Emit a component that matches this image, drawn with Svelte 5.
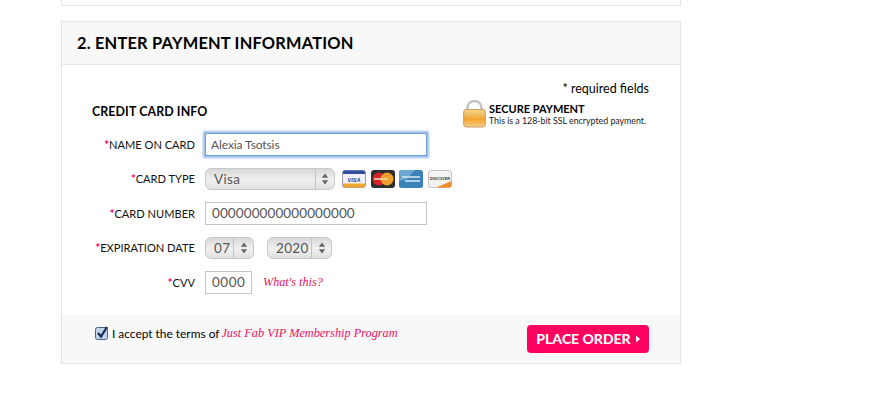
<script lang="ts">
  const months = "07";
  const years = "2020";
</script>

{#snippet stepper()}
  <span class="select__arrows">
    <svg viewBox="0 0 10 16" width="8" height="14" aria-hidden="true">
      <path d="M5 1 L9 6.5 H1 Z" fill="#666" />
      <path d="M5 15 L9 9.5 H1 Z" fill="#666" />
    </svg>
  </span>
{/snippet}

{#snippet label(text: string)}
  <span class="label"><span class="req">*</span>{text}</span>
{/snippet}

<div class="page">
  <div class="prev"></div>

  <section class="card">
    <h2 class="card__title">2. ENTER PAYMENT INFORMATION</h2>

    <div class="card__body">
      <p class="required">* required fields</p>

      <div class="intro">
        <h3 class="intro__title">CREDIT CARD INFO</h3>
        <div class="secure">
          <svg class="secure__lock" viewBox="0 0 23 28" width="23" height="28" aria-hidden="true">
            <defs>
              <linearGradient id="lockBody" x1="0" y1="0" x2="0" y2="1">
                <stop offset="0" stop-color="#f8d68a" />
                <stop offset="0.45" stop-color="#eeb04a" />
                <stop offset="0.55" stop-color="#f6a52a" />
                <stop offset="1" stop-color="#f7cf8c" />
              </linearGradient>
            </defs>
            <path d="M4.5 10V7.500a7 6.500 0 0 1 14 0V10" fill="none" stroke="#c4c4c4" stroke-width="2.400" />
            <rect x="0.7" y="9.500" width="21.6" height="17.5" rx="2.5" fill="url(#lockBody)" stroke="#c89a5e" />
          </svg>
          <div>
            <div class="secure__title">SECURE PAYMENT</div>
            <div class="secure__note">This is a 128-bit SSL encrypted payment.</div>
          </div>
        </div>
      </div>

      <div class="form">
        {@render label("NAME ON CARD")}
        <div class="field">
          <input class="input input--name input--focus" type="text" value="Alexia Tsotsis" />
        </div>

        {@render label("CARD TYPE")}
        <div class="field">
          <div class="select select--type">
            <span class="select__value">Visa</span>
            {@render stepper()}
          </div>
          <div class="cards">
            <svg viewBox="0 0 24 18" width="24" height="18" aria-hidden="true">
              <rect x="0.5" y="0.5" width="23" height="17" rx="2" fill="#f2f2f6" stroke="#9a9ab0" />
              <path d="M1 2.5a2 2 0 0 1 2-2h18a2 2 0 0 1 2 2V4H1Z" fill="#2d4f9e" />
              <path d="M1 13.5h22v2a2 2 0 0 1-2 2H3a2 2 0 0 1-2-2Z" fill="#f0a92e" />
              <text x="12" y="11.5" class="cards__text" fill="#27438e">VISA</text>
            </svg>
            <svg viewBox="0 0 24 18" width="24" height="18" aria-hidden="true">
              <rect x="0" y="0" width="24" height="18" rx="3" fill="#2e2e2e" />
              <circle cx="8" cy="9" r="6.5" fill="#d8222a" />
              <circle cx="16" cy="9" r="6.5" fill="#eda02c" />
              <rect x="3" y="8" width="14" height="2" fill="#f3d6b0" opacity="0.8" />
            </svg>
            <svg viewBox="0 0 24 18" width="24" height="18" aria-hidden="true">
              <rect x="0" y="0" width="24" height="18" rx="2.5" fill="#3b82b8" />
              <path d="M0 2.5A2.5 2.5 0 0 1 2.500 0H16L8 9 0 11Z" fill="#6aa8d2" />
              <rect x="3" y="6" width="18" height="2" fill="#cfe3f1" opacity="0.8" />
              <rect x="6" y="10" width="15" height="2" fill="#cfe3f1" opacity="0.8" />
            </svg>
            <svg viewBox="0 0 24 18" width="24" height="18" aria-hidden="true">
              <rect x="0.5" y="0.5" width="23" height="17" rx="2.5" fill="#f2f2f0" stroke="#c4c4c4" />
              <path d="M8 17.500 L23.500 11v4a2.500 2.500 0 0 1-2.500 2.500Z" fill="#ee8c2c" />
              <text x="12" y="10" class="cards__text cards__text--small" fill="#333">DISCOVER</text>
            </svg>
          </div>
        </div>

        {@render label("CARD NUMBER")}
        <div class="field">
          <input class="input input--number" type="text" value="000000000000000000" />
        </div>

        {@render label("EXPIRATION DATE")}
        <div class="field field--exp">
          <div class="select select--month">
            <span class="select__value">{months}</span>
            {@render stepper()}
          </div>
          <div class="select select--year">
            <span class="select__value">{years}</span>
            {@render stepper()}
          </div>
        </div>

        {@render label("CVV")}
        <div class="field">
          <input class="input input--cvv" type="text" value="0000" />
          <a class="whats" href="#cvv">What's this?</a>
        </div>
      </div>
    </div>

    <div class="card__foot">
      <div class="terms">
        <svg class="terms__check" viewBox="0 0 14 14" width="14" height="14" aria-hidden="true">
          <rect x="0.5" y="1.500" width="12" height="12" rx="2" fill="#c5d3e8" stroke="#4a6186" />
          <path d="M3 7 L6 10.500 L12 1" fill="none" stroke="#1c2f55" stroke-width="2.300" />
        </svg>
        <span>I accept the terms of</span>
        <a class="terms__link" href="#terms">Just Fab VIP Membership Program</a>
      </div>
      <button class="order" type="button">
        PLACE ORDER
        <svg viewBox="0 0 5 9" width="4" height="8" aria-hidden="true"><path d="M0 0 L5 4.500 L0 9 Z" fill="#fff" /></svg>
      </button>
    </div>
  </section>
</div>

<style>
  :global(body) {
    margin: 0;
    background: #fff;
  }

  .page {
    width: 620px;
    margin-left: 61px;
    font-family: Lato, "Liberation Sans", sans-serif;
    color: #000;
  }

  .prev {
    height: 5px;
    border: 1px solid #e6e6e6;
    border-top: 0;
    margin-bottom: 15px;
  }

  .card {
    border: 1px solid #e4e4e4;
  }

  .card__title {
    margin: 0;
    height: 42px;
    padding-left: 15px;
    background: #f8f8f8;
    border-bottom: 1px solid #e4e4e4;
    font-size: 16.400px;
    font-weight: 700;
    line-height: 42px;
    letter-spacing: 0.2px;
  }

  .card__body {
    box-sizing: border-box;
    height: 250px;
    padding: 16px 31px 0 30px;
  }

  .required {
    margin: 0;
    text-align: right;
    font-size: 12.500px;
    line-height: 16px;
  }

  .intro {
    display: flex;
    align-items: flex-start;
    margin-top: 3px;
  }

  .intro__title {
    margin: 4px 0 0;
    width: 371px;
    flex: none;
    font-size: 12.400px;
    font-weight: 700;
    line-height: 16px;
    letter-spacing: 0.1px;
  }

  .secure {
    display: flex;
    gap: 3px;
    white-space: nowrap;
  }

  .secure__title {
    font-size: 11px;
    font-weight: 700;
    line-height: 13px;
    margin-top: 2px;
  }

  .secure__note {
    font-size: 8.800px;
    line-height: 12px;
    color: #222;
  }

  .form {
    display: grid;
    grid-template-columns: 133px 1fr;
    grid-auto-rows: 34.5px;
    column-gap: 10px;
    align-items: center;
    margin: -1px 0 0 -30px;
  }

  .label {
    text-align: right;
    font-size: 11.100px;
    white-space: nowrap;
    color: #111;
  }

  .req {
    color: #ff0060;
    font-weight: 900;
  }

  .field {
    display: flex;
    align-items: center;
  }

  .field--exp {
    gap: 13px;
  }

  .input {
    box-sizing: border-box;
    height: 23px;
    margin: 0;
    padding: 0 5px;
    border: 1px solid #c4c4c4;
    border-radius: 0;
    outline: 0;
    font-family: inherit;
    font-size: 13.500px;
    color: #555;
    background: #fff;
  }

  .input--name,
  .input--number {
    width: 222px;
  }

  .input--name {
    font-size: 12px;
    letter-spacing: -0.1px;
  }

  .input--number {
    letter-spacing: 0.1px;
    padding-left: 6px;
  }

  .input--focus {
    border: 1px solid #6f9fd6;
    box-shadow: 0 0 2px 2px #9cc0ea;
  }

  .input--cvv {
    width: 47px;
    letter-spacing: 0.5px;
    padding-left: 6px;
  }

  .whats {
    margin-left: 11px;
    font-family: "Liberation Serif", serif;
    font-style: italic;
    font-size: 12.200px;
    color: #f0105f;
    text-decoration: none;
  }

  .select {
    box-sizing: border-box;
    display: flex;
    height: 22px;
    border: 1px solid #c8c8c8;
    border-radius: 6px;
    background: linear-gradient(#d8d8d8, #f0f0f0 55%, #e0e0e0);
    font-size: 13.500px;
    letter-spacing: 0.3px;
    color: #555;
  }

  .select__value {
    flex: 1;
    padding-left: 8px;
    line-height: 20px;
  }

  .select__arrows {
    width: 18px;
    border-left: 1px solid #c4c4c4;
    display: flex;
    align-items: center;
    justify-content: center;
  }

  .select--type {
    width: 130px;
  }

  .select--month {
    width: 49px;
  }

  .select--year {
    width: 65px;
  }

  .select--month .select__arrows,
  .select--year .select__arrows {
    width: 19px;
  }

  .cards {
    display: flex;
    gap: 4.600px;
    margin-left: 7px;
  }

  .cards__text {
    font-family: "Liberation Sans", sans-serif;
    font-size: 5.500px;
    font-weight: 700;
    font-style: italic;
    text-anchor: middle;
  }

  .cards__text--small {
    font-size: 3.800px;
    font-style: normal;
  }

  .card__foot {
    display: flex;
    justify-content: space-between;
    align-items: flex-start;
    height: 48px;
    box-sizing: border-box;
    padding: 10px 31px 0 33px;
    background: #f8f8f8;
  }

  .terms {
    display: flex;
    align-items: center;
    gap: 4px;
    height: 16px;
    font-size: 11.900px;
    white-space: nowrap;
  }

  .terms > span {
    margin-left: -1px;
  }

  .terms__link {
    margin-left: -2px;
    font-family: "Liberation Serif", serif;
    font-style: italic;
    font-size: 12.300px;
    color: #f0105f;
    text-decoration: none;
  }

  .order {
    display: flex;
    align-items: center;
    justify-content: center;
    gap: 5px;
    width: 122px;
    height: 28px;
    padding: 0 0 1px;
    border: 0;
    border-radius: 4px;
    background: #ff005f;
    color: #fff;
    font-family: inherit;
    font-size: 14px;
    font-weight: 900;
  }
</style>
